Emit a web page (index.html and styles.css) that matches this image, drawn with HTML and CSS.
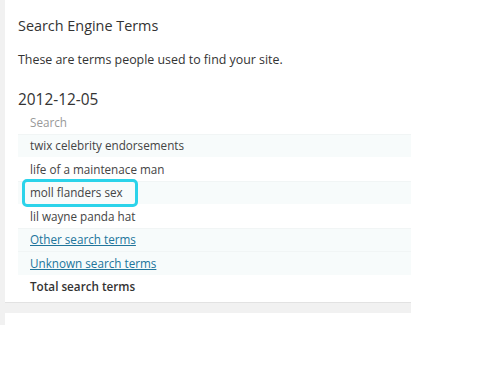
FILE: index.html
```html
<!DOCTYPE html>
<html>
  <head>
    <meta charset="utf-8" />
    <link rel="stylesheet" href="styles.css">
  </head>
  <body>
    <div class="screen">
      <div class="panel">
        <h3 class="title">Search Engine Terms</h3>
        <p class="intro">These are terms people used to find your site.</p>
        <h4 class="date">2012-12-05</h4>
        <table class="terms">
          <thead>
            <tr><th>Search</th></tr>
          </thead>
          <tbody>
            <tr class="alt"><td>twix celebrity endorsements</td></tr>
            <tr><td>life of a maintenace man</td></tr>
            <tr class="alt"><td><span class="marked">moll flanders sex</span></td></tr>
            <tr><td>lil wayne panda hat</td></tr>
            <tr class="alt"><td><a href="#">Other search terms</a></td></tr>
            <tr class="alt"><td><a href="#">Unknown search terms</a></td></tr>
            <tr class="total"><td>Total search terms</td></tr>
          </tbody>
        </table>
      </div>
      <div class="panel next"></div>
    </div>
  </body>
</html>
```

FILE: styles.css
```css
body {
  margin: 0;
  background: #fff;
  font-family: "Open Sans", sans-serif;
  color: #333;
}

.screen {
  width: 411px;
  height: 325px;
  padding-left: 5px;
  box-sizing: border-box;
  background: #f1f1f1;
}

.panel {
  height: 303px;
  box-sizing: border-box;
  padding: 16px 0 0 13px;
  background: #fff;
  border-bottom: 1px solid #e2e2e2;
}

.panel.next {
  height: 12px;
  margin-top: 10px;
  padding: 0;
  border-bottom: none;
}

.title {
  margin: 0;
  font-size: 14.4px;
  font-weight: 400;
  line-height: 20px;
  color: #333;
}

.intro {
  margin: 16px 0 0;
  font-size: 12.4px;
  line-height: 16px;
  color: #333;
}

.date {
  margin: 22px 0 0;
  font-size: 15.4px;
  font-weight: 400;
  line-height: 20px;
  color: #333;
}

.terms {
  width: 100%;
  border-collapse: collapse;
}

.terms th,
.terms td {
  height: 23.5px;
  padding: 0 0 0 12px;
  text-align: left;
  font-size: 11.7px;
  line-height: 16px;
  vertical-align: middle;
}

.terms th {
  font-weight: 400;
  color: #999;
}

.terms td {
  color: #444;
}

.terms tr.alt td {
  background: #f7fbfb;
  box-shadow: inset 0 1px 0 #f1f5f5;
}

.terms a {
  color: #21759b;
}

.terms tr.total td {
  font-weight: 600;
  color: #333;
}

.marked {
  position: relative;
}

.marked::after {
  content: "";
  position: absolute;
  left: -8px;
  right: -15px;
  top: -5px;
  bottom: -7px;
  border: 3.5px solid #2bd3ea;
  border-radius: 5px;
}
```
